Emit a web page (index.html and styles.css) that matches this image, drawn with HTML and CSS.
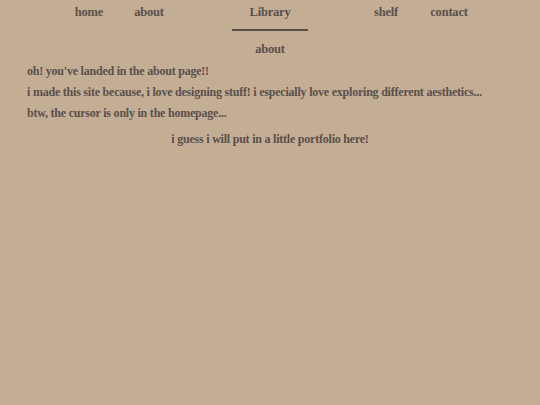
FILE: index.html
```html
<!DOCTYPE html>
<html>
<head>
<meta charset="utf-8">
<link rel="stylesheet" href="styles.css">
</head>
<body>
<nav class="nav">
  <a class="item home">home</a>
  <a class="item about">about</a>
  <a class="item library">Library</a>
  <a class="item shelf">shelf</a>
  <a class="item contact">contact</a>
</nav>
<h1 class="title">about</h1>
<main class="content">
  <p>oh! you've landed in the about page!!</p>
  <p>i made this site because, i love designing stuff! i especially love exploring different aesthetics...</p>
  <p>btw, the cursor is only in the homepage...</p>
  <p class="center">i guess i will put in a little portfolio here!</p>
</main>
</body>
</html>
```
FILE: styles.css
```css
html, body {
  margin: 0;
  padding: 0;
  background: #c4ad95;
}
body {
  font-family: "Liberation Serif", "DejaVu Serif", serif;
  font-weight: bold;
  font-size: 12.5px;
  color: #5a504a;
  width: 540px;
  height: 405px;
}
.nav {
  display: flex;
  padding-left: 59px;
  height: 31px;
  letter-spacing: -0.2px;
}
.item {
  display: block;
  text-align: center;
  padding-top: 4px;
  line-height: 16px;
  box-sizing: border-box;
  height: 31px;
}
.home { width: 60px; }
.about { width: 60px; }
.library { width: 76px; margin-left: 53px; border-bottom: 2px solid #5a504a; }
.shelf { width: 60px; margin-left: 48px; }
.contact { width: 66px; }
.title {
  margin: 0;
  font-size: 12.5px;
  text-align: center;
  line-height: 16px;
  padding-top: 10px;
  letter-spacing: -0.2px;
}
.content {
  padding: 0 27px;
  font-size: 12px;
  letter-spacing: -0.22px;
}
.content p {
  margin: 0;
  line-height: 21px;
  white-space: nowrap;
}
.content p:first-child { margin-top: 4px; }
.content .center {
  text-align: center;
  margin-top: 5px;
}
```
